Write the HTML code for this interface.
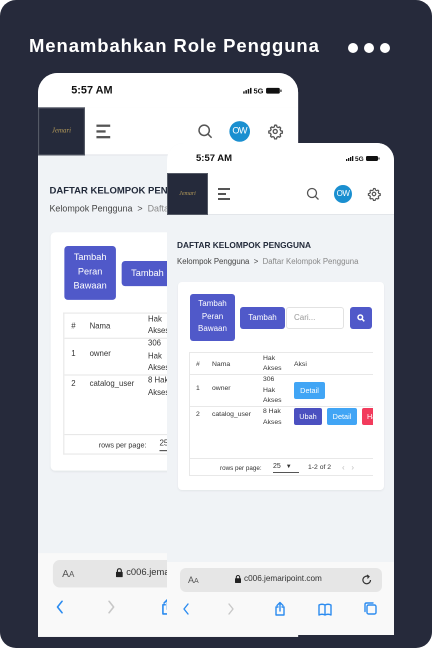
<!DOCTYPE html>
<html><head><meta charset="utf-8"><style>
*{margin:0;padding:0;box-sizing:border-box}
body{width:432px;height:648px;background:#fff;overflow:hidden;font-family:"Liberation Sans",sans-serif;position:relative}
.bg{position:absolute;left:0;top:0;width:432px;height:648px;background:#262a3b;border-radius:16px}
.title{position:absolute;left:29px;top:35px;color:#fff;font-size:18.5px;font-weight:bold;letter-spacing:0.9px}
.dot{position:absolute;top:43px;width:10px;height:10px;border-radius:50%;background:#fff}
.ph{position:absolute;width:227px;height:492px;background:#f0f3f6;border-radius:17px 17px 0 0;overflow:hidden;transform-origin:0 0}
.a{position:absolute}
.sb{left:0;top:0;width:227px;height:30px;background:#fff}
.time{left:29px;top:10px;font-size:9.5px;font-weight:bold;color:#111}
.hdr{left:0;top:30px;width:227px;height:42px;background:#fff;border-bottom:1px solid #e3e6ea}
.logo{left:0;top:30px;width:41px;height:42px;background:#252a3b;border:1px solid #555a66;color:#b49a5a;font-family:"Liberation Serif",serif;font-style:italic;font-size:6px;text-align:center;line-height:40px}
.ham{left:51px;width:12px;height:1.5px;background:#555}
.ow{left:167px;top:42px;width:18px;height:18px;border-radius:50%;background:#1a8fd0;color:#fff;font-size:8px;text-align:center;line-height:18px;letter-spacing:-0.5px}
.h1{left:10px;top:97px;font-size:8.3px;font-weight:bold;color:#222a3a;white-space:nowrap}
.bc{left:10px;top:114px;font-size:7.8px;color:#444;white-space:nowrap}
.bc span{color:#888}
.card{left:11px;top:139px;width:206px;height:208px;background:#fff;border-radius:4px;box-shadow:0 1px 2px rgba(0,0,0,.06)}
.btn{background:#5059c9;color:#fff;border-radius:3px;font-size:8px;text-align:center}
.tbl{left:22px;top:209px;width:200px;height:124px;border:1px solid #e8e8e8;border-right:none;font-size:6.8px;color:#333}
.tbl .a{white-space:nowrap}
.hl{left:0;width:200px;height:1px;background:#e8e8e8}
.sbtn{color:#fff;border-radius:2px;font-size:7.3px;text-align:center;line-height:17px;height:17px}
.bb{left:0;top:419px;width:227px;height:80px;background:#f9f9f9}
.url{left:13px;top:425px;width:202px;height:24px;background:#e6e6e6;border-radius:6px}
</style></head><body>
<div class="bg"></div>
<div class="title">Menambahkan Role Pengguna</div>
<div class="dot" style="left:348px"></div><div class="dot" style="left:364px"></div><div class="dot" style="left:380px"></div>

<div class="ph" style="left:38px;top:73px;transform:scale(1.146)">
<div class="a sb"></div><div class="a time">5:57 AM</div>
<svg class="a" style="left:179px;top:12px" width="36" height="7" viewBox="0 0 36 7"><rect x="0" y="4" width="1.3" height="2" fill="#111"/><rect x="2" y="3" width="1.3" height="3" fill="#111"/><rect x="4" y="2" width="1.3" height="4" fill="#111"/><rect x="6" y="1" width="1.3" height="5" fill="#111"/><text x="9" y="6" font-size="6.5" font-weight="bold" fill="#111" font-family="Liberation Sans">5G</text><rect x="20" y="1" width="12" height="5" rx="1.2" fill="#111"/><rect x="32.5" y="2.5" width="1" height="2" fill="#111"/></svg>
<div class="a hdr"></div><div class="a logo">Jemari</div>
<div class="a ham" style="top:45px"></div><div class="a ham" style="top:50px;width:8px"></div><div class="a ham" style="top:55px"></div>
<svg class="a" style="left:139px;top:44px" width="14" height="14" viewBox="0 0 14 14" fill="none" stroke="#555" stroke-width="1.3"><circle cx="6" cy="6" r="4.5"/><path d="M9.4 9.4L12.5 12.5"/></svg>
<div class="a ow">OW</div>
<svg class="a" style="left:200px;top:44px" width="14" height="14" viewBox="0 0 24 24" fill="none" stroke="#555" stroke-width="2"><circle cx="12" cy="12" r="3"/><path d="M12 2.5l2 .3.6 2.4 1.8 1 2.3-.8 1.4 1.5-.8 2.3 1 1.8 2.4.6v2.8l-2.4.6-1 1.8.8 2.3-1.5 1.4-2.3-.8-1.8 1-.6 2.4h-2.8l-.6-2.4-1.8-1-2.3.8-1.4-1.5.8-2.3-1-1.8-2.4-.6v-2.8l2.4-.6 1-1.8-.8-2.3 1.5-1.4 2.3.8 1.8-1 .6-2.4z"/></svg>
<div class="a h1">DAFTAR KELOMPOK PENGGUNA</div>
<div class="a bc">Kelompok Pengguna &nbsp;&gt;&nbsp; <span>Daftar Kelompok Pengguna</span></div>
<div class="a card"></div>
<div class="a btn" style="left:23px;top:151px;width:45px;height:47px;line-height:12.5px;padding-top:4px">Tambah Peran Bawaan</div>
<div class="a btn" style="left:73px;top:164px;width:45px;height:22px;line-height:22px">Tambah</div>
<div class="a" style="left:119px;top:164px;width:58px;height:22px;border:1px solid #e2e2e2;border-radius:3px;font-size:8px;color:#999;line-height:20px;padding-left:7px;background:#fff">Cari...</div>
<div class="a btn" style="left:183px;top:164px;width:22px;height:22px"><svg width="8" height="8" viewBox="0 0 8 8" style="margin-top:7px" fill="none" stroke="#fff" stroke-width="1.5"><circle cx="3.3" cy="3.3" r="2.3"/><path d="M5 5l2.3 2.3"/></svg></div>
<div class="a tbl">
<div class="a" style="left:6px;top:8px">#</div><div class="a" style="left:22px;top:8px">Nama</div>
<div class="a" style="left:73px;top:1px;line-height:10px">Hak<br>Akses</div><div class="a" style="left:104px;top:8px">Aksi</div>
<div class="a hl" style="top:21px"></div>
<div class="a" style="left:6px;top:32px">1</div><div class="a" style="left:22px;top:32px">owner</div>
<div class="a" style="left:73px;top:22px;line-height:10.5px">306<br>Hak<br>Akses</div>
<div class="a sbtn" style="left:104px;top:29px;width:31px;background:#41a5f5">Detail</div>
<div class="a hl" style="top:53px"></div>
<div class="a" style="left:6px;top:58px">2</div><div class="a" style="left:22px;top:58px">catalog_user</div>
<div class="a" style="left:73px;top:54px;line-height:10.5px">8 Hak<br>Akses</div>
<div class="a sbtn" style="left:104px;top:55px;width:28px;background:#4b50c0">Ubah</div>
<div class="a sbtn" style="left:137px;top:55px;width:30px;background:#41a5f5">Detail</div>
<div class="a sbtn" style="left:172px;top:55px;width:30px;background:#f23b5c;text-align:left;padding-left:5px">Hapus</div>
<div class="a hl" style="top:105px"></div>
<div class="a" style="left:30px;top:112px;font-size:6.3px">rows per page:</div>
<div class="a" style="left:83px;top:110px;width:26px;border-bottom:1px solid #555;height:10px;font-size:7px">25 <span style="font-size:6px;margin-left:3px">&#9660;</span></div>
<div class="a" style="left:118px;top:111px">1-2 of 2</div>
<div class="a" style="left:152px;top:110px;color:#bbb;font-size:8px">&lsaquo; &nbsp; &rsaquo;</div>
</div>
<div class="a bb"></div><div class="a url"></div>
<div class="a" style="left:21px;top:432px;font-size:9px;color:#555">A<span style="font-size:7px">A</span></div>
<svg class="a" style="left:68px;top:432px" width="6" height="8" viewBox="0 0 6 8"><rect x="0" y="3.3" width="6" height="4.7" rx=".6" fill="#222"/><path d="M1.3 3.5V2.2a1.7 1.7 0 013.4 0v1.3" fill="none" stroke="#222" stroke-width="1"/></svg>
<div class="a" style="left:77px;top:431px;font-size:8.2px;color:#333">c006.jemaripoint.com</div>
<svg class="a" style="left:195px;top:431px" width="10" height="11" viewBox="0 0 10 11" fill="none" stroke="#333" stroke-width="1.2"><path d="M8.5 6a3.8 3.8 0 11-2-3.4"/><path d="M5 1l2 1.6-1.6 1.8"/></svg>
<svg class="a" style="left:15px;top:458px" width="205" height="16" viewBox="0 0 205 16" fill="none" stroke-width="1.4" stroke-linecap="round" stroke-linejoin="round"><path d="M6 3L2 8l4 5" stroke="#2c8cf0"/><path d="M47 3l4 5-4 5" stroke="#c8c8c8"/><g stroke="#2c8cf0"><path d="M98 2v8M95 4.5l3-3 3 3M96 6h-2v8h8V6h-2"/><path d="M137 4q3-1.5 6 0v10q-3-1.5-6 0zM143 4q3-1.5 6 0v10q-3-1.5-6 0z"/><rect x="185" y="4" width="9" height="9" rx="1.5"/><path d="M183 10.5V3.5q0-1.5 1.5-1.5H191"/></g></svg>
</div>

<div class="ph" style="left:167px;top:143px">
<div class="a sb"></div><div class="a time">5:57 AM</div>
<svg class="a" style="left:179px;top:12px" width="36" height="7" viewBox="0 0 36 7"><rect x="0" y="4" width="1.3" height="2" fill="#111"/><rect x="2" y="3" width="1.3" height="3" fill="#111"/><rect x="4" y="2" width="1.3" height="4" fill="#111"/><rect x="6" y="1" width="1.3" height="5" fill="#111"/><text x="9" y="6" font-size="6.5" font-weight="bold" fill="#111" font-family="Liberation Sans">5G</text><rect x="20" y="1" width="12" height="5" rx="1.2" fill="#111"/><rect x="32.5" y="2.5" width="1" height="2" fill="#111"/></svg>
<div class="a hdr"></div><div class="a logo">Jemari</div>
<div class="a ham" style="top:45px"></div><div class="a ham" style="top:50px;width:8px"></div><div class="a ham" style="top:55px"></div>
<svg class="a" style="left:139px;top:44px" width="14" height="14" viewBox="0 0 14 14" fill="none" stroke="#555" stroke-width="1.3"><circle cx="6" cy="6" r="4.5"/><path d="M9.4 9.4L12.5 12.5"/></svg>
<div class="a ow">OW</div>
<svg class="a" style="left:200px;top:44px" width="14" height="14" viewBox="0 0 24 24" fill="none" stroke="#555" stroke-width="2"><circle cx="12" cy="12" r="3"/><path d="M12 2.5l2 .3.6 2.4 1.8 1 2.3-.8 1.4 1.5-.8 2.3 1 1.8 2.4.6v2.8l-2.4.6-1 1.8.8 2.3-1.5 1.4-2.3-.8-1.8 1-.6 2.4h-2.8l-.6-2.4-1.8-1-2.3.8-1.4-1.5.8-2.3-1-1.8-2.4-.6v-2.8l2.4-.6 1-1.8-.8-2.3 1.5-1.4 2.3.8 1.8-1 .6-2.4z"/></svg>
<div class="a h1">DAFTAR KELOMPOK PENGGUNA</div>
<div class="a bc">Kelompok Pengguna &nbsp;&gt;&nbsp; <span>Daftar Kelompok Pengguna</span></div>
<div class="a card"></div>
<div class="a btn" style="left:23px;top:151px;width:45px;height:47px;line-height:12.5px;padding-top:4px">Tambah Peran Bawaan</div>
<div class="a btn" style="left:73px;top:164px;width:45px;height:22px;line-height:22px">Tambah</div>
<div class="a" style="left:119px;top:164px;width:58px;height:22px;border:1px solid #e2e2e2;border-radius:3px;font-size:8px;color:#999;line-height:20px;padding-left:7px;background:#fff">Cari...</div>
<div class="a btn" style="left:183px;top:164px;width:22px;height:22px"><svg width="8" height="8" viewBox="0 0 8 8" style="margin-top:7px" fill="none" stroke="#fff" stroke-width="1.5"><circle cx="3.3" cy="3.3" r="2.3"/><path d="M5 5l2.3 2.3"/></svg></div>
<div class="a tbl" style="width:184px;overflow:hidden">
<div class="a" style="left:6px;top:8px">#</div><div class="a" style="left:22px;top:8px">Nama</div>
<div class="a" style="left:73px;top:1px;line-height:10px">Hak<br>Akses</div><div class="a" style="left:104px;top:8px">Aksi</div>
<div class="a hl" style="top:21px"></div>
<div class="a" style="left:6px;top:32px">1</div><div class="a" style="left:22px;top:32px">owner</div>
<div class="a" style="left:73px;top:22px;line-height:10.5px">306<br>Hak<br>Akses</div>
<div class="a sbtn" style="left:104px;top:29px;width:31px;background:#41a5f5">Detail</div>
<div class="a hl" style="top:53px"></div>
<div class="a" style="left:6px;top:58px">2</div><div class="a" style="left:22px;top:58px">catalog_user</div>
<div class="a" style="left:73px;top:54px;line-height:10.5px">8 Hak<br>Akses</div>
<div class="a sbtn" style="left:104px;top:55px;width:28px;background:#4b50c0">Ubah</div>
<div class="a sbtn" style="left:137px;top:55px;width:30px;background:#41a5f5">Detail</div>
<div class="a sbtn" style="left:172px;top:55px;width:30px;background:#f23b5c;text-align:left;padding-left:5px">Hapus</div>
<div class="a hl" style="top:105px"></div>
<div class="a" style="left:30px;top:112px;font-size:6.3px">rows per page:</div>
<div class="a" style="left:83px;top:110px;width:26px;border-bottom:1px solid #555;height:10px;font-size:7px">25 <span style="font-size:6px;margin-left:3px">&#9660;</span></div>
<div class="a" style="left:118px;top:111px">1-2 of 2</div>
<div class="a" style="left:152px;top:110px;color:#bbb;font-size:8px">&lsaquo; &nbsp; &rsaquo;</div>
</div>
<div class="a bb"></div><div class="a url"></div>
<div class="a" style="left:21px;top:432px;font-size:9px;color:#555">A<span style="font-size:7px">A</span></div>
<svg class="a" style="left:68px;top:432px" width="6" height="8" viewBox="0 0 6 8"><rect x="0" y="3.3" width="6" height="4.7" rx=".6" fill="#222"/><path d="M1.3 3.5V2.2a1.7 1.7 0 013.4 0v1.3" fill="none" stroke="#222" stroke-width="1"/></svg>
<div class="a" style="left:77px;top:431px;font-size:8.2px;color:#333">c006.jemaripoint.com</div>
<svg class="a" style="left:195px;top:431px" width="10" height="11" viewBox="0 0 10 11" fill="none" stroke="#333" stroke-width="1.2"><path d="M8.5 6a3.8 3.8 0 11-2-3.4"/><path d="M5 1l2 1.6-1.6 1.8"/></svg>
<svg class="a" style="left:15px;top:458px" width="205" height="16" viewBox="0 0 205 16" fill="none" stroke-width="1.4" stroke-linecap="round" stroke-linejoin="round"><path d="M6 3L2 8l4 5" stroke="#2c8cf0"/><path d="M47 3l4 5-4 5" stroke="#c8c8c8"/><g stroke="#2c8cf0"><path d="M98 2v8M95 4.5l3-3 3 3M96 6h-2v8h8V6h-2"/><path d="M137 4q3-1.5 6 0v10q-3-1.5-6 0zM143 4q3-1.5 6 0v10q-3-1.5-6 0z"/><rect x="185" y="4" width="9" height="9" rx="1.5"/><path d="M183 10.5V3.5q0-1.5 1.5-1.5H191"/></g></svg>
</div>
</body></html>
